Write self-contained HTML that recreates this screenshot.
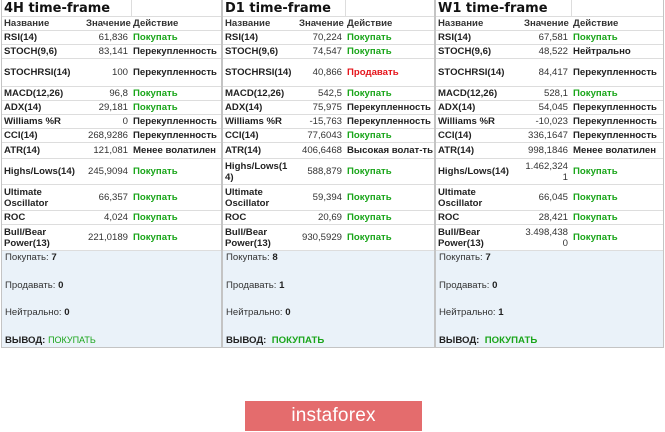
<!DOCTYPE html>
<html><head><meta charset="utf-8">
<style>
body{margin:0;width:665px;height:432px;background:#fff;font-family:"Liberation Sans",Arial,sans-serif;font-size:9.6px;color:#222;position:relative;overflow:hidden}
.p{position:absolute;top:0;border:1px solid #c4c4c4;border-top:none;box-sizing:border-box}
table{border-collapse:collapse;width:100%;table-layout:fixed}
td{border-bottom:1px solid #ddd;padding:0 2px;line-height:11px;vertical-align:middle;white-space:nowrap;overflow:hidden}
tr.t td{font-size:14px;height:15px;line-height:15px;border-bottom:1px solid #ddd;color:#111}
tr.t td:last-child{border-left:1px solid #ddd}
tr.t b{font-weight:700;font-family:"DejaVu Sans","Liberation Sans",sans-serif;font-size:13px}
tr.h td{height:13px;font-weight:bold;color:#333}
td.n{font-weight:bold;color:#222;white-space:normal}
td.v{text-align:right;color:#333;white-space:normal;padding-right:3px}
td.a{font-weight:bold;color:#222}
.g{color:#1aa51a!important;font-weight:bold}
.r{color:#e5141b!important;font-weight:bold}
.s{height:13px}.d{height:27px}.m{height:15px}.w{height:25px}
.sum{background:#eaf2f9;height:96px;position:relative;color:#333}
.sum div{position:absolute;left:3px}
.sum b{color:#222}
</style></head><body>

<div class="p" style="left:1px;width:221px">
<table>
<colgroup><col style="width:82px"><col style="width:47px"><col></colgroup>
<tr class="t"><td colspan="2"><b>4H time-frame</b></td><td></td></tr>
<tr class="h"><td>Название</td><td class="v" style="font-weight:bold">Значение</td><td>Действие</td></tr>
<tr><td class="n s">RSI(14)</td><td class="v">61,836</td><td class="g">Покупать</td></tr>
<tr><td class="n s">STOCH(9,6)</td><td class="v">83,141</td><td class="a">Перекупленность</td></tr>
<tr><td class="n d">STOCHRSI(14)</td><td class="v">100</td><td class="a">Перекупленность</td></tr>
<tr><td class="n s">MACD(12,26)</td><td class="v">96,8</td><td class="g">Покупать</td></tr>
<tr><td class="n s">ADX(14)</td><td class="v">29,181</td><td class="g">Покупать</td></tr>
<tr><td class="n s">Williams %R</td><td class="v">0</td><td class="a">Перекупленность</td></tr>
<tr><td class="n s">CCI(14)</td><td class="v">268,9286</td><td class="a">Перекупленность</td></tr>
<tr><td class="n m">ATR(14)</td><td class="v">121,081</td><td class="a">Менее волатилен</td></tr>
<tr><td class="n w" style="white-space:nowrap">Highs/Lows(14)</td><td class="v">245,9094</td><td class="g">Покупать</td></tr>
<tr><td class="n w">Ultimate Oscillator</td><td class="v">66,357</td><td class="g">Покупать</td></tr>
<tr><td class="n s">ROC</td><td class="v">4,024</td><td class="g">Покупать</td></tr>
<tr><td class="n w">Bull/Bear Power(13)</td><td class="v">221,0189</td><td class="g">Покупать</td></tr>
</table>
<div class="sum"><div style="top:1px">Покупать: <b>7</b></div><div style="top:29px">Продавать: <b>0</b></div><div style="top:56px">Нейтрально: <b>0</b></div><div style="top:84px"><b>ВЫВОД:</b> <span class="g" style="font-weight:normal;font-size:9px">ПОКУПАТЬ</span></div></div>
</div>

<div class="p" style="left:222px;width:213px">
<table>
<colgroup><col style="width:74px"><col style="width:48px"><col></colgroup>
<tr class="t"><td colspan="2"><b>D1 time-frame</b></td><td></td></tr>
<tr class="h"><td>Название</td><td class="v" style="font-weight:bold">Значение</td><td>Действие</td></tr>
<tr><td class="n s">RSI(14)</td><td class="v">70,224</td><td class="g">Покупать</td></tr>
<tr><td class="n s">STOCH(9,6)</td><td class="v">74,547</td><td class="g">Покупать</td></tr>
<tr><td class="n d">STOCHRSI(14)</td><td class="v">40,866</td><td class="r">Продавать</td></tr>
<tr><td class="n s">MACD(12,26)</td><td class="v">542,5</td><td class="g">Покупать</td></tr>
<tr><td class="n s">ADX(14)</td><td class="v">75,975</td><td class="a">Перекупленность</td></tr>
<tr><td class="n s">Williams %R</td><td class="v">-15,763</td><td class="a">Перекупленность</td></tr>
<tr><td class="n s">CCI(14)</td><td class="v">77,6043</td><td class="g">Покупать</td></tr>
<tr><td class="n m">ATR(14)</td><td class="v">406,6468</td><td class="a">Высокая волат-ть</td></tr>
<tr><td class="n w" style="word-break:break-all">Highs/Lows(14)</td><td class="v">588,879</td><td class="g">Покупать</td></tr>
<tr><td class="n w">Ultimate Oscillator</td><td class="v">59,394</td><td class="g">Покупать</td></tr>
<tr><td class="n s">ROC</td><td class="v">20,69</td><td class="g">Покупать</td></tr>
<tr><td class="n w">Bull/Bear Power(13)</td><td class="v">930,5929</td><td class="g">Покупать</td></tr>
</table>
<div class="sum"><div style="top:1px">Покупать: <b>8</b></div><div style="top:29px">Продавать: <b>1</b></div><div style="top:56px">Нейтрально: <b>0</b></div><div style="top:84px"><b>ВЫВОД:</b> &nbsp;<span class="g">ПОКУПАТЬ</span></div></div>
</div>

<div class="p" style="left:435px;width:229px">
<table>
<colgroup><col style="width:86px"><col style="width:49px"><col></colgroup>
<tr class="t"><td colspan="2"><b>W1 time-frame</b></td><td></td></tr>
<tr class="h"><td>Название</td><td class="v" style="font-weight:bold">Значение</td><td>Действие</td></tr>
<tr><td class="n s">RSI(14)</td><td class="v">67,581</td><td class="g">Покупать</td></tr>
<tr><td class="n s">STOCH(9,6)</td><td class="v">48,522</td><td class="a">Нейтрально</td></tr>
<tr><td class="n d">STOCHRSI(14)</td><td class="v">84,417</td><td class="a">Перекупленность</td></tr>
<tr><td class="n s">MACD(12,26)</td><td class="v">528,1</td><td class="g">Покупать</td></tr>
<tr><td class="n s">ADX(14)</td><td class="v">54,045</td><td class="a">Перекупленность</td></tr>
<tr><td class="n s">Williams %R</td><td class="v">-10,023</td><td class="a">Перекупленность</td></tr>
<tr><td class="n s">CCI(14)</td><td class="v">336,1647</td><td class="a">Перекупленность</td></tr>
<tr><td class="n m">ATR(14)</td><td class="v">998,1846</td><td class="a">Менее волатилен</td></tr>
<tr><td class="n w" style="white-space:nowrap">Highs/Lows(14)</td><td class="v">1.462,324<br>1</td><td class="g">Покупать</td></tr>
<tr><td class="n w">Ultimate Oscillator</td><td class="v">66,045</td><td class="g">Покупать</td></tr>
<tr><td class="n s">ROC</td><td class="v">28,421</td><td class="g">Покупать</td></tr>
<tr><td class="n w">Bull/Bear Power(13)</td><td class="v">3.498,438<br>0</td><td class="g">Покупать</td></tr>
</table>
<div class="sum"><div style="top:1px">Покупать: <b>7</b></div><div style="top:29px">Продавать: <b>0</b></div><div style="top:56px">Нейтрально: <b>1</b></div><div style="top:84px"><b>ВЫВОД:</b> &nbsp;<span class="g">ПОКУПАТЬ</span></div></div>
</div>

<div style="position:absolute;left:245px;top:401px;width:177px;height:30px;background:#e46c6d;color:#fff;font-size:19px;text-align:center;line-height:29px;letter-spacing:0.2px">instaforex</div>
</body></html>
